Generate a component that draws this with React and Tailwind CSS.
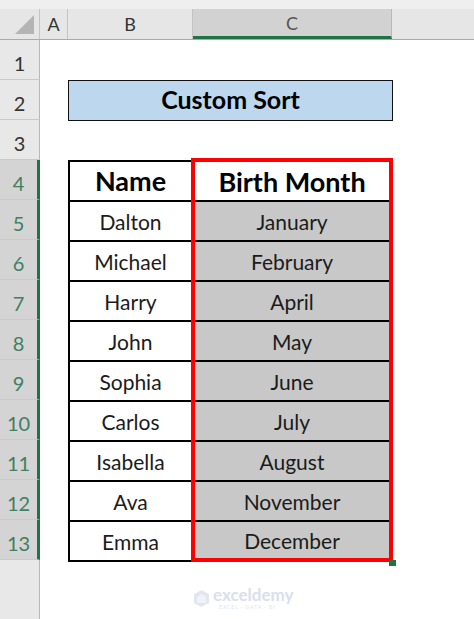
import React from "react";

const names = ["Dalton", "Michael", "Harry", "John", "Sophia", "Carlos", "Isabella", "Ava", "Emma"];
const months = ["January", "February", "April", "May", "June", "July", "August", "November", "December"];

function RowNum({ n, selected }) {
  return (
    <div
      className={
        "h-[40px] flex items-center justify-center pt-[6px] border-b border-[#c9c9c9] text-[20px] " +
        (selected
          ? "bg-[#d4d4d4] text-[#3f7f62] border-r-[3px] border-r-[#217346]"
          : "bg-[#e8e8e8] text-[#333] border-r border-r-[#b9b9b9]")
      }
    >
      {n}
    </div>
  );
}

export default function App() {
  const font = { fontFamily: "Lato, 'Open Sans', sans-serif" };
  return (
    <div className="w-[474px] h-[619px] bg-white overflow-hidden flex flex-col" style={font}>
      {/* top band */}
      <div className="h-[9px] bg-[#efefef] shrink-0" />
      {/* column header */}
      <div className="h-[31px] flex bg-[#e6e6e6] border-b border-[#aaaaaa] shrink-0 text-[18px] text-[#333]">
        <div className="w-[40px] relative border-r border-[#c4c4c4]">
          <svg className="absolute left-[15px] top-[6px]" width="19" height="19" viewBox="0 0 19 19">
            <polygon points="19,0 19,19 0,19" fill="#b4b4b4" />
          </svg>
        </div>
        <div className="w-[28px] flex items-center justify-center border-r border-[#c4c4c4]">A</div>
        <div className="w-[125px] flex items-center justify-center border-r border-[#c4c4c4]">B</div>
        <div className="w-[199px] flex items-center justify-center bg-[#d2d2d2] border-r border-[#b8b8b8] border-b-[3px] border-b-[#217346] text-[#555] pt-[2px]">
          C
        </div>
        <div className="flex-1" />
      </div>

      {/* body */}
      <div className="flex flex-1">
        {/* row headers */}
        <div className="w-[40px] flex flex-col shrink-0">
          {Array.from({ length: 13 }, (_, i) => (
            <RowNum key={i} n={i + 1} selected={i >= 3} />
          ))}
          <div className="flex-1 bg-[#e8e8e8] border-r border-[#b9b9b9]" />
        </div>

        {/* sheet */}
        <div className="flex-1 relative">
          <div className="h-[40px]" />
          <div className="h-[40px] flex items-center">
            <div className="ml-[28px] w-[325px] h-[41px] bg-[#bdd7ee] border-[1.5px] border-[#111] flex items-center justify-center font-bold text-[25px] text-black">
              Custom Sort
            </div>
          </div>
          <div className="h-[38px]" />
          <div className="ml-[28px] flex items-start">
            {/* column B */}
            <div className="w-[123px] mt-[2px] border-t-2 border-l-2 border-black flex flex-col">
              <div className="h-[40px] border-b-2 border-black flex items-center justify-center font-bold text-[27px] text-black">
                Name
              </div>
              {names.map((n) => (
                <div key={n} className="h-[40px] border-b-2 border-black flex items-center justify-center pt-[2px] text-[21px] text-[#1b1b1b]">
                  {n}
                </div>
              ))}
            </div>
            {/* column C */}
            <div className="w-[202px] border-4 border-[#ff0000] relative flex flex-col">
              <div className="h-[40px] border-b-2 border-black bg-white flex items-center justify-center font-bold text-[27px] text-black pt-[2px]">
                Birth Month
              </div>
              {months.map((m, i) => (
                <div
                  key={m}
                  className={
                    "bg-[#c8c8c8] flex items-center justify-center pt-[2px] text-[21px] text-[#1b1b1b] " +
                    (i === months.length - 1 ? "h-[36px]" : "h-[40px] border-b-2 border-black")
                  }
                >
                  {m}
                </div>
              ))}
              <div className="absolute right-[-7px] bottom-[-8px] w-[7px] h-[6px] bg-[#217346]" />
            </div>
          </div>

          {/* watermark */}
          <div className="absolute left-[153px] top-[547px] flex items-center gap-[3px] opacity-90">
            <svg width="17" height="19" viewBox="0 0 17 19">
              <polygon points="8.5,1 16,5 16,14 8.5,18 1,14 1,5" fill="#dfe4ef" />
              <polygon points="8.5,5 13,8 13,14 4,14 4,8" fill="#eef1f7" />
            </svg>
            <div className="flex flex-col">
              <div className="h-[15px] leading-[15px] text-[17px] font-bold text-[#d5dcec]">exceldemy</div>
              <div className="h-[6px] leading-[6px] text-[5px] tracking-[1px] text-[#dde2ee] mt-[2px] pl-[6px]">EXCEL · DATA · BI</div>
            </div>
          </div>
        </div>
      </div>
    </div>
  );
}
